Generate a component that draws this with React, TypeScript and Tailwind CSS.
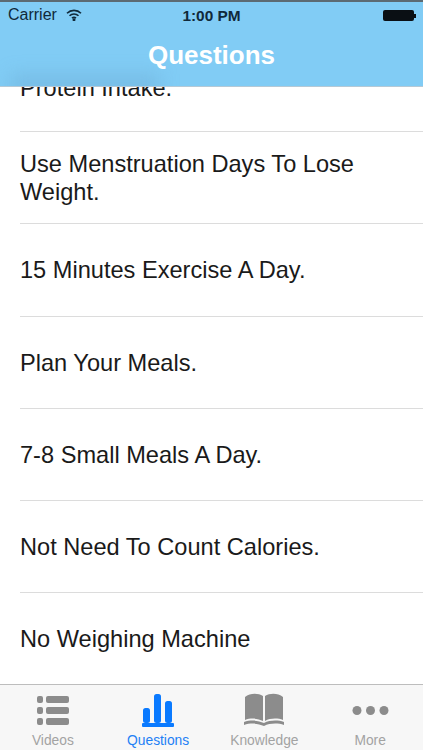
const rows = [
  ['Use Menstruation Days To Lose Weight.', 'h-[92px]'],
  ['15 Minutes Exercise A Day.', 'h-[93px]'],
  ['Plan Your Meals.', 'h-[92px]'],
  ['7-8 Small Meals A Day.', 'h-[92px]'],
  ['Not Need To Count Calories.', 'h-[92px]'],
  ['No Weighing Machine', 'h-[92px]'],
];

const App = () => {
  return (
    <div className="w-[423px] h-[750px] flex flex-col overflow-hidden bg-white font-['Liberation_Sans',sans-serif]">
      {/* Nav bar */}
      <header className="h-[87px] shrink-0 relative z-10 overflow-hidden bg-[#81ccf5] border-t-2 border-[#5c6a73] border-b border-b-[#b5c9d6]">
        {/* list text blurred through the bar */}
        <div className="absolute left-[10px] bottom-[-10px] w-[150px] h-[22px] bg-[#5f9cc2]/30 blur-[9px]" />
        <div className="h-[30px] relative flex items-center justify-center text-[#10293a]">
          <div className="absolute left-[8px] top-[3px] flex items-center gap-[9px]">
            <span className="text-[16px] leading-[20px]">Carrier</span>
            <svg width="16" height="12" viewBox="0 0 16 12" fill="none" stroke="#10293a" strokeWidth="1.6">
              <path d="M1 4.2a10 10 0 0 1 14 0" />
              <path d="M3.5 6.8a6.4 6.4 0 0 1 9 0" />
              <path d="M6 9.2a3 3 0 0 1 4 0" />
              <circle cx="8" cy="10.8" r="0.7" fill="#10293a" />
            </svg>
          </div>
          <span className="text-[15.4px] font-bold -mt-[2px]">1:00 PM</span>
          <div className="absolute right-[7px] top-[8px] flex items-center">
            <div className="w-[31px] h-[11px] rounded-[2px] bg-[#0a0f14]" />
            <div className="w-[2px] h-[4px] bg-[#0a0f14]" />
          </div>
        </div>
        <div className="relative text-center text-white font-bold text-[26px] leading-[28px] mt-[9px]">Questions</div>
      </header>

      {/* List */}
      <main className="flex-1 overflow-hidden pl-[20px]">
        <div className="h-[45px] border-b border-[#dcdcdc] relative overflow-hidden">
          <div className="absolute left-0 top-[-12px] text-[23.6px] leading-[26px] text-[#1a1a1a]">Protein Intake.</div>
        </div>
        {rows.map(([label, h], i) => (
          <div
            key={label}
            className={`${h} flex items-center pr-[40px] text-[23.6px] leading-[28px] text-[#1a1a1a] ${i < rows.length - 1 ? 'border-b border-[#dcdcdc]' : ''}`}
          >
            {label}
          </div>
        ))}
      </main>

      {/* Tab bar */}
      <nav className="h-[66px] shrink-0 grid grid-cols-4 bg-[#f7f7f7] border-t border-[#bdbdbd] text-[13.8px] text-[#a3a3a3]">
        <div className="flex flex-col items-center">
          <svg width="32" height="29" viewBox="0 0 32 29" className="mt-[11px]" fill="#8c8c8c">
            <rect x="0" y="0" width="6" height="7" rx="2" />
            <rect x="9" y="0" width="23" height="7" rx="2" />
            <rect x="0" y="11" width="6" height="7" rx="2" />
            <rect x="9" y="11" width="23" height="7" rx="2" />
            <rect x="0" y="22" width="6" height="7" rx="2" />
            <rect x="9" y="22" width="23" height="7" rx="2" />
          </svg>
          <span className="mt-[8px] leading-[15px]">Videos</span>
        </div>
        <div className="flex flex-col items-center text-[#1e80f5] -ml-[1px]">
          <svg width="32" height="33" viewBox="0 0 32 33" className="mt-[9px]" fill="#0a7aff">
            <rect x="1" y="14" width="7" height="15" rx="2.5" />
            <rect x="12" y="0" width="7" height="29" rx="2.5" />
            <rect x="23" y="7" width="7" height="22" rx="2.5" />
            <rect x="0" y="29" width="32" height="4" rx="1" />
          </svg>
          <span className="mt-[6px] leading-[15px]">Questions</span>
        </div>
        <div className="flex flex-col items-center">
          <svg width="40" height="33" viewBox="0 0 40 33" className="mt-[8px]" fill="#8c8c8c">
            <path d="M1 4C6 0 14 0 19 3V28C14 25 6 25 1 27Z" />
            <path d="M39 4C34 0 26 0 21 3V28C26 25 34 25 39 27Z" />
            <path d="M0 29C6 27 14 27 20 30C26 27 34 27 40 29V32C34 30 26 30 20 33C14 30 6 30 0 32Z" />
          </svg>
          <span className="mt-[7px] leading-[15px]">Knowledge</span>
        </div>
        <div className="flex flex-col items-center">
          <svg width="37" height="11" viewBox="0 0 37 11" className="mt-[20px]" fill="#8c8c8c">
            <circle cx="5" cy="5.5" r="4.5" />
            <circle cx="18.5" cy="5.5" r="4.5" />
            <circle cx="32" cy="5.5" r="4.5" />
          </svg>
          <span className="mt-[17px] leading-[15px]">More</span>
        </div>
      </nav>
    </div>
  );
};

export default App;
